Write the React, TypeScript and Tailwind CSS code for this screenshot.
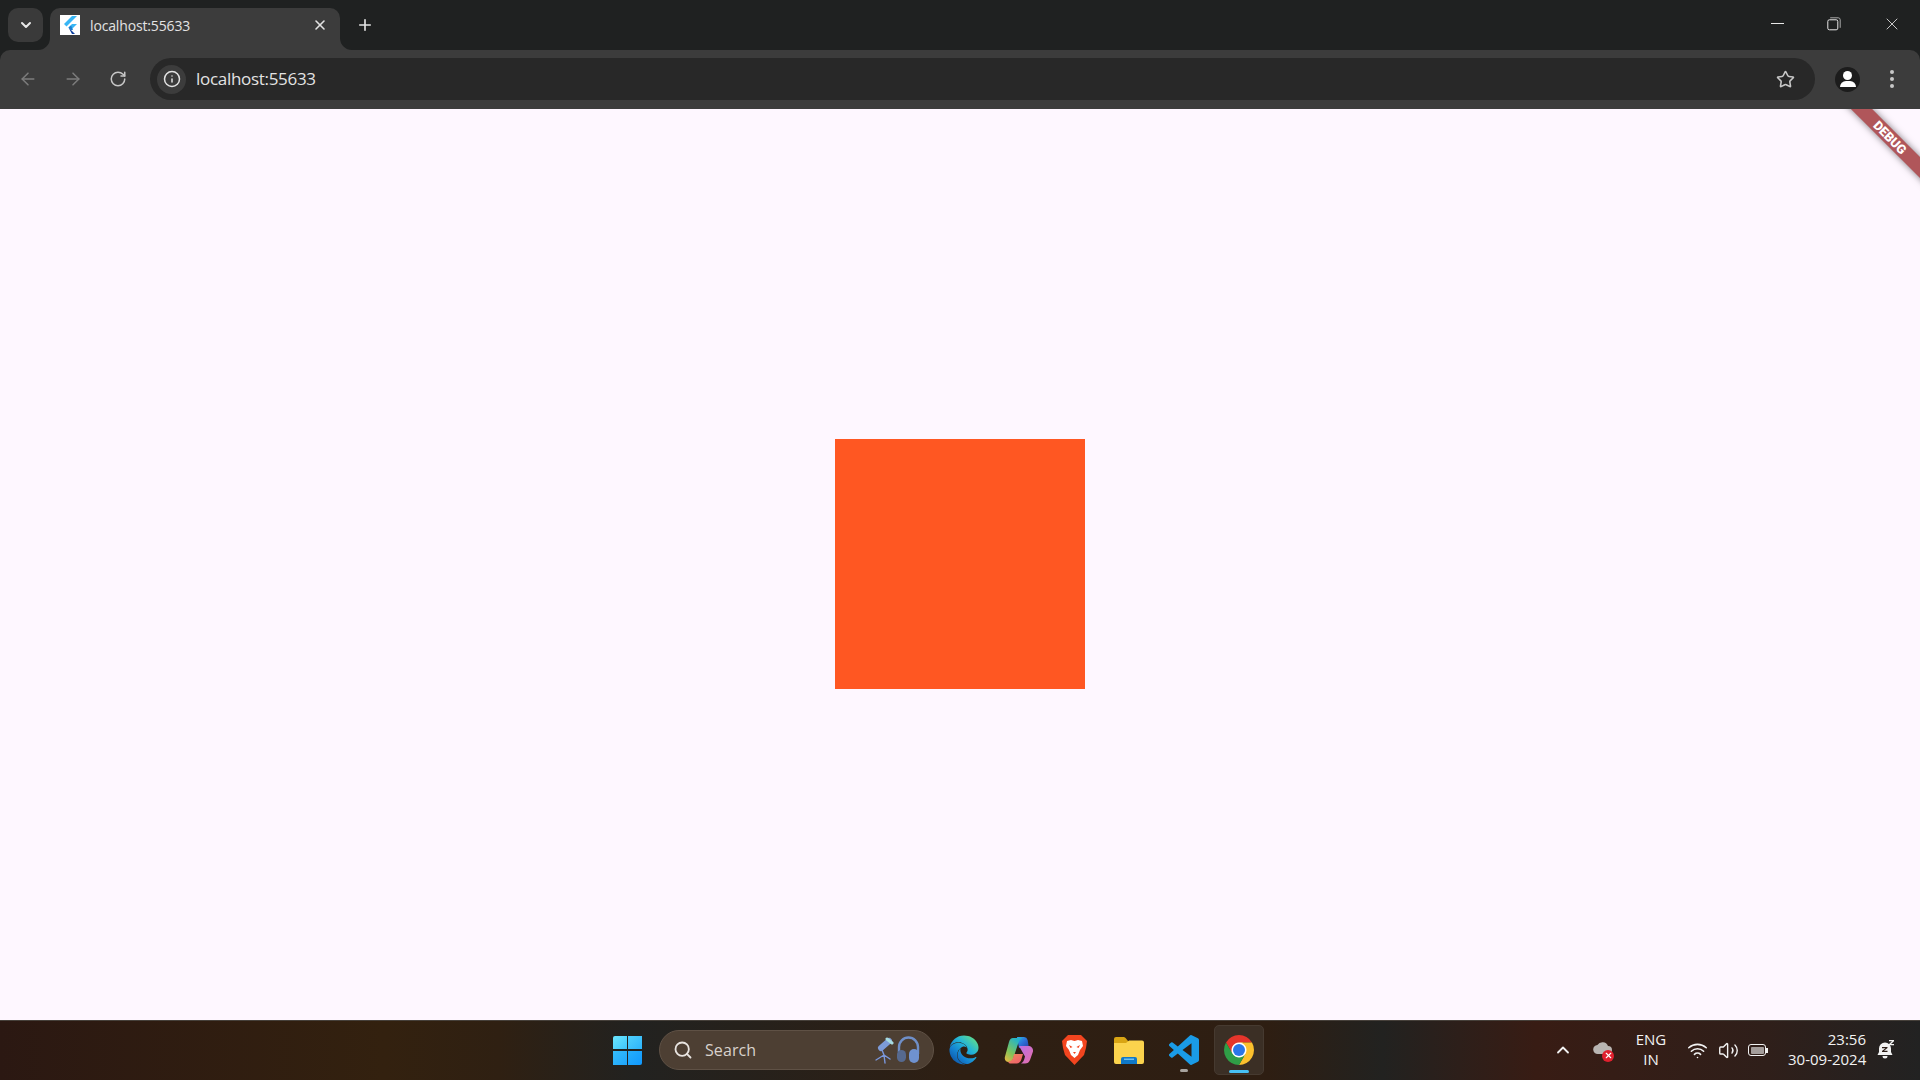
import { ArrowLeft, ArrowRight, ChevronDown, ChevronUp, Info, Plus, RotateCw, Search, Star, Volume2, Wifi, X } from 'lucide-react'
import { FaEdge } from 'react-icons/fa'

function FlutterIcon() {
  return (
    <div className="w-5 h-5 bg-white flex items-center justify-center">
      <svg width="16" height="18" viewBox="0 0 16 18">
        <polygon points="10,0 15,0 4.5,10.5 2,8" fill="#38b6f5" />
        <polygon points="10,8 15,8 9,14 6.5,11.5" fill="#38b6f5" />
        <polygon points="6.5,11.5 9,9.5 11,14 9,14" fill="#1a7fd0" />
        <polygon points="6.5,11.5 9,14 13,18 10,18" fill="#0b3f9e" />
      </svg>
    </div>
  )
}

function RestoreIcon() {
  return (
    <svg width="14" height="14" viewBox="0 0 14 14" fill="none" stroke="#e8e8e8" strokeWidth="1">
      <rect x="0.8" y="2.8" width="10" height="10" rx="1.6" />
      <path d="M3.2 0.8h8a2 2 0 0 1 2 2v8" stroke="#a8a8a8" />
    </svg>
  )
}

function TabFlare({ side }: { side: 'left' | 'right' }) {
  return side === 'left' ? (
    <svg className="absolute -left-3 bottom-0" width="12" height="12" viewBox="0 0 12 12">
      <path d="M12 0v12H0a12 12 0 0 0 12-12z" fill="#3c3c3c" />
    </svg>
  ) : (
    <svg className="absolute -right-3 bottom-0" width="12" height="12" viewBox="0 0 12 12">
      <path d="M0 0v12h12A12 12 0 0 1 0 0z" fill="#3c3c3c" />
    </svg>
  )
}

function WindowsLogo() {
  return (
    <div className="grid grid-cols-2 gap-[1.5px] w-[29px] h-[29px]">
      <div className="bg-gradient-to-br from-[#6be6fd] to-[#3cc6fb] rounded-tl-[2px]" />
      <div className="bg-gradient-to-br from-[#4fd0fc] to-[#2cb4fb]" />
      <div className="bg-gradient-to-br from-[#35bdfb] to-[#1fa5fb]" />
      <div className="bg-gradient-to-br from-[#25aefc] to-[#1098fd] rounded-br-[2px]" />
    </div>
  )
}

function MicIcon() {
  return (
    <svg width="20" height="28" viewBox="0 0 20 28" fill="none">
      <path d="M7 12 15 5" stroke="#7d9bd8" strokeWidth="6" strokeLinecap="round" />
      <path d="M13 3 18 7" stroke="#a6dbe0" strokeWidth="3" strokeLinecap="round" />
      <path d="M8 14 10 19M10 19 2 24M10 19 11 27M10 19 16 23" stroke="#7a97dc" strokeWidth="1.4" strokeLinecap="round" />
    </svg>
  )
}

function HeadphonesIcon() {
  return (
    <svg width="24" height="28" viewBox="0 0 24 28" fill="none">
      <path d="M3 16V11a9.500 9.500 0 0 1 19 0v7" stroke="#6f8fc8" strokeWidth="2.400" />
      <rect x="1" y="14" width="9" height="12" rx="4.500" fill="#56698f" />
      <rect x="13" y="13" width="10" height="14" rx="5" fill="#6f92d0" />
    </svg>
  )
}

function EdgeIcon() {
  return (
    <div className="relative w-[30px] h-[30px]">
      <svg width="0" height="0" className="absolute">
        <defs>
          <linearGradient id="edgeGrad" x1="0.9" y1="0.1" x2="0.2" y2="0.9">
            <stop offset="0" stopColor="#5fdc8c" />
            <stop offset="0.4" stopColor="#22b3d8" />
            <stop offset="0.75" stopColor="#1480d0" />
            <stop offset="1" stopColor="#0f5fb0" />
          </linearGradient>
        </defs>
      </svg>
      <FaEdge size={30} fill="url(#edgeGrad)" />
    </div>
  )
}

function CopilotIcon() {
  return (
    <svg width="30" height="30" viewBox="0 0 30 30">
      <defs>
        <linearGradient id="copA" x1="0" y1="0" x2="1" y2="1">
          <stop offset="0" stopColor="#2fb0e8" />
          <stop offset="0.5" stopColor="#2d6fd8" />
          <stop offset="1" stopColor="#2a3fa8" />
        </linearGradient>
        <linearGradient id="copB" x1="0" y1="1" x2="0.6" y2="0">
          <stop offset="0" stopColor="#f4b63e" />
          <stop offset="0.45" stopColor="#7cc45c" />
          <stop offset="1" stopColor="#24b3c8" />
        </linearGradient>
        <linearGradient id="copC" x1="0" y1="0" x2="1" y2="1">
          <stop offset="0" stopColor="#b86fe8" />
          <stop offset="1" stopColor="#e86fa8" />
        </linearGradient>
        <linearGradient id="copD" x1="0" y1="0" x2="1" y2="1">
          <stop offset="0" stopColor="#f08a5c" />
          <stop offset="1" stopColor="#ee5a6c" />
        </linearGradient>
      </defs>
      <path d="M13 2h7a4 4 0 0 1 3.600 3L25 13l-10 0z" fill="url(#copA)" />
      <path d="M9 3h9c-2 1-3 3-4 6L9 24c-.7 2-2 3-4.500 3C2 27 0 25 1 21.500L5 7C5.700 4.500 7 3 9 3z" fill="url(#copB)" />
      <path d="M15 11h9c3 0 5.500 2 5 5.500L26 25c-1 2.500-2.500 3.500-5 3.500h-4c2-1 3-3 4-7z" fill="url(#copC)" />
      <path d="M10 19h9l-1.500 5c-.8 2.800-2.500 4.500-5 4.500H6c-1.500 0-2-1.500-1-2 2-.5 3.500-1.500 4-3.500z" fill="url(#copD)" />
    </svg>
  )
}

function FolderIcon() {
  return (
    <svg width="30" height="27" viewBox="0 0 30 27">
      <path d="M0 2a2 2 0 0 1 2-2h7.500c1 0 1.500.5 2.500 1.500L14 4v3H0z" fill="#d9a514" />
      <path d="M0 6 12 6 15 3.500h13a2 2 0 0 1 2 2V25a2 2 0 0 1-2 2H2a2 2 0 0 1-2-2z" fill="#fbd34d" />
      <path d="M7 22a2 2 0 0 1 2-2h12a2 2 0 0 1 2 2v5H7z" fill="#0f78c8" />
      <rect x="10" y="21.500" width="10" height="1.500" fill="#6fc0ee" />
    </svg>
  )
}

function VsCodeIcon() {
  return (
    <svg width="30" height="30" viewBox="0 0 24 24">
      <path
        fill="#1a9be6"
        d="M23.15 2.587L18.21.21a1.494 1.494 0 0 0-1.705.29l-9.46 8.63-4.12-3.128a.999.999 0 0 0-1.276.057L.327 7.261A1 1 0 0 0 .326 8.74L3.899 12 .326 15.26a1 1 0 0 0 .001 1.479L1.65 17.94a.999.999 0 0 0 1.276.057l4.12-3.128 9.46 8.63a1.492 1.492 0 0 0 1.704.29l4.942-2.377A1.5 1.5 0 0 0 24 20.06V3.939a1.5 1.5 0 0 0-.85-1.352zm-5.146 14.861L10.826 12l7.178-5.448v10.896z"
      />
    </svg>
  )
}

function ChromeIcon() {
  const wedge = 'M41.32 14A20 20 0 0 0 6.68 14L15.34 29A10 10 0 0 1 24 14Z'
  return (
    <svg width="30" height="30" viewBox="4 4 40 40">
      <circle cx="24" cy="24" r="11" fill="#fff" />
      <path d={wedge} fill="#e5352b" />
      <path d={wedge} fill="#fbc02d" transform="rotate(120 24 24)" />
      <path d={wedge} fill="#2f9e46" transform="rotate(240 24 24)" />
      <circle cx="24" cy="24" r="8" fill="#2a76e8" />
    </svg>
  )
}

function BraveIcon() {
  return (
    <svg width="25" height="30" viewBox="0 0 25 30">
      <polygon points="6,0 19,0 25,6 24,13 22,20 12.500,30 3,20 1,13 0,6" fill="#f2451f" />
      <polygon points="5,6 9,5 12.500,6 16,5 20,6 21,11 18,15 16,20 12.500,23 9,20 7,15 4,11" fill="#fff" />
      <polygon points="7,10 10.500,12 8.500,13" fill="#f2451f" />
      <polygon points="18,10 14.500,12 16.500,13" fill="#f2451f" />
      <polygon points="11,17 14,17 12.500,19" fill="#f2451f" />
    </svg>
  )
}

function CloudError() {
  return (
    <div className="relative w-[20px] h-[20px]">
      <svg width="20" height="14" viewBox="0 0 20 14" className="mt-[1px]">
        <path d="M5 13a4.500 4.500 0 0 1-.6-9A6 6 0 0 1 15 5a4 4 0 0 1 0 8z" fill="#b9b5b2" />
      </svg>
      <div className="absolute right-[-1px] bottom-[-1px] w-[12px] h-[12px] rounded-full bg-[#e0202e] flex items-center justify-center">
        <X size={9} strokeWidth={3} className="text-white" />
      </div>
    </div>
  )
}

function BellSnooze() {
  return (
    <svg width="18" height="20" viewBox="0 0 18 20" fill="#f2f2f2">
      <path d="M8 2.500a6 6 0 0 1 6 6v3.500l1.500 3H.5L2 12V8.500a6 6 0 0 1 6-6z" />
      <path d="M5.500 16h5a2.500 2.500 0 0 1-5 0z" />
      <path d="M12 0h5v1.200L14 4h3v1.300h-5V4l3-2.800h-3z" />
      <path d="M5 7h5.500v1.100L7 10.800h3.500V12H5v-1.100l3.400-2.700H5z" fill="#2a1c16" />
    </svg>
  )
}

export default function App() {
  return (
    <div className="w-[1920px] h-[1080px] flex flex-col overflow-hidden font-['Open_Sans',sans-serif]">
      {/* Tab strip */}
      <div className="h-[50px] shrink-0 bg-[#1f2121] flex items-start pt-2 pl-2 relative">
        <button className="w-[35px] h-[34px] rounded-[10px] bg-[#3a3a3a] flex items-center justify-center">
          <ChevronDown size={16} strokeWidth={3} className="text-[#e8e8e8]" />
        </button>
        <div className="relative ml-[7px] w-[290px] h-[42px] bg-[#3c3c3c] rounded-t-[10px] flex items-center pl-[10px] pr-[12px] pb-[8px]">
          <TabFlare side="left" />
          <TabFlare side="right" />
          <FlutterIcon />
          <span className="ml-[10px] text-[14px] tracking-[-0.15px] text-[#e3e3e3] flex-1">localhost:55633</span>
          <X size={16} strokeWidth={2.4} className="text-[#e3e3e3]" />
        </div>
        <Plus size={18} strokeWidth={2.2} className="ml-[16px] mt-[8px] text-[#e3e3e3]" />
        <div className="ml-auto flex items-center h-[32px] pr-[18px]">
          <svg width="13" height="2" viewBox="0 0 13 2"><rect width="13" height="1" fill="#e8e8e8" /></svg>
          <div className="ml-[43px]"><RestoreIcon /></div>
          <X size={20} strokeWidth={1} className="ml-[41px] text-[#e8e8e8]" />
        </div>
      </div>

      {/* Toolbar */}
      <div className="h-[59px] shrink-0 bg-[#1f2121]">
        <div className="h-full bg-[#3c3c3c] rounded-t-[10px] flex items-center pl-[18px] pr-[18px] pb-px">
          <ArrowLeft size={20} strokeWidth={1.8} className="text-[#7c7c7c]" />
          <ArrowRight size={20} strokeWidth={1.8} className="ml-[25px] text-[#7c7c7c]" />
          <RotateCw size={18} strokeWidth={2} className="ml-[26px] text-[#c7c7c7]" />
          <div className="ml-[23px] w-[1665px] h-[42px] rounded-full bg-[#282828] flex items-center pl-[7px] pr-[20px]">
            <div className="w-[29px] h-[29px] rounded-full bg-[#3c3c3c] flex items-center justify-center">
              <Info size={18} strokeWidth={2} className="text-[#e3e3e3]" />
            </div>
            <span className="ml-[10px] text-[17px] text-[#e3e3e3] tracking-[-0.3px] flex-1">localhost:55633</span>
            <Star size={19} strokeWidth={2} className="text-[#c7c7c7]" />
          </div>
          <div className="ml-[20px] w-[25px] h-[25px] rounded-full bg-[#1c1c1c] flex flex-col items-center justify-center">
            <div className="w-[9px] h-[9px] rounded-full bg-white" />
            <div className="w-[16px] h-[6px] rounded-t-[6px] bg-white mt-[1px]" />
          </div>
          <div className="ml-[30px] flex flex-col gap-[3px]">
            <div className="w-1 h-1 rounded-full bg-[#c7c7c7]" />
            <div className="w-1 h-1 rounded-full bg-[#c7c7c7]" />
            <div className="w-1 h-1 rounded-full bg-[#c7c7c7]" />
          </div>
        </div>
      </div>

      {/* Page */}
      <div className="relative flex-1 bg-[#fef7ff] flex items-center justify-center overflow-hidden">
        <div className="w-[250px] h-[250px] mb-px bg-[#ff5722]" />
        <div className="absolute top-[21px] right-[-70px] w-[200px] h-[15px] rotate-45 bg-[#b0565a] shadow-[0_0_7px_rgba(0,0,0,0.5)] flex items-center justify-center">
          <span className="text-[12.75px] leading-[15px] font-black text-white font-['Roboto',sans-serif]">DEBUG</span>
        </div>
      </div>

      {/* Taskbar */}
      <div className="h-[60px] shrink-0 flex items-center pb-px border-t border-[#46403a] bg-[linear-gradient(90deg,#2b1812_0%,#33210f_20%,#2f2012_26%,#222220_33%,#2e1f13_50%,#2e1e12_66%,#222220_72%,#381c14_80%,#2f1f1a_92%,#222222_100%)]">
        <div className="ml-[613px]"><WindowsLogo /></div>
        <div className="ml-[17px] w-[275px] h-[40px] rounded-full bg-[#4d3f33] border border-[#5f5145] flex items-center pl-[13px] pr-[13px]">
          <Search size={20} strokeWidth={2.2} className="text-[#e8e4e0]" />
          <span className="ml-[12px] text-[16px] tracking-[0.1px] text-[#d8d2cc] flex-1">Search</span>
          <MicIcon />
          <div className="ml-[2px]"><HeadphonesIcon /></div>
        </div>
        <div className="ml-[15px] w-[30px] flex justify-center"><EdgeIcon /></div>
        <div className="ml-[25px] w-[30px]"><CopilotIcon /></div>
        <div className="ml-[25px] w-[30px] flex justify-center"><BraveIcon /></div>
        <div className="ml-[25px] w-[30px]"><FolderIcon /></div>
        <div className="ml-[25px] w-[30px] relative flex justify-center">
          <VsCodeIcon />
          <div className="absolute left-[11px] bottom-[-7px] w-2 h-[3px] rounded-full bg-[#a8a39e]" />
        </div>
        <div className="ml-[15px] relative w-[50px] h-[50px] rounded-[5px] bg-[#3b2f25] border border-[#463a30] flex items-center justify-center">
          <ChromeIcon />
          <div className="absolute left-[14px] bottom-[1px] w-5 h-[3px] rounded-full bg-[#47c1f5]" />
        </div>

        {/* Tray */}
        <div className="ml-auto flex items-center pr-[25px]">
          <ChevronUp size={20} strokeWidth={2.2} className="text-[#f2f2f2]" />
          <div className="ml-[20px]"><CloudError /></div>
          <div className="ml-[20px] mb-[2px] w-[36px] text-center text-[15px] leading-[20px] text-[#f2f2f2]">
            <div>ENG</div>
            <div>IN</div>
          </div>
          <Wifi size={21} strokeWidth={1.8} className="ml-[18px] text-[#f2f2f2]" />
          <Volume2 size={21} strokeWidth={1.6} className="ml-[10px] text-[#f2f2f2]" />
          <div className="ml-[9px] w-[18px] h-[12px] rounded-[3px] border border-[#f2f2f2] p-[1.5px] relative">
            <div className="w-full h-full rounded-[1px] bg-[#f2f2f2] opacity-60" />
            <div className="absolute right-[-3px] top-[2.5px] w-[2px] h-[5px] bg-[#f2f2f2]" />
          </div>
          <div className="ml-[22px] mb-[2px] text-right text-[15px] leading-[20px] text-[#f2f2f2] w-[78px] whitespace-nowrap">
            <div>23:56</div>
            <div>30-09-2024</div>
          </div>
          <div className="ml-[11px]"><BellSnooze /></div>
        </div>
      </div>
    </div>
  )
}
